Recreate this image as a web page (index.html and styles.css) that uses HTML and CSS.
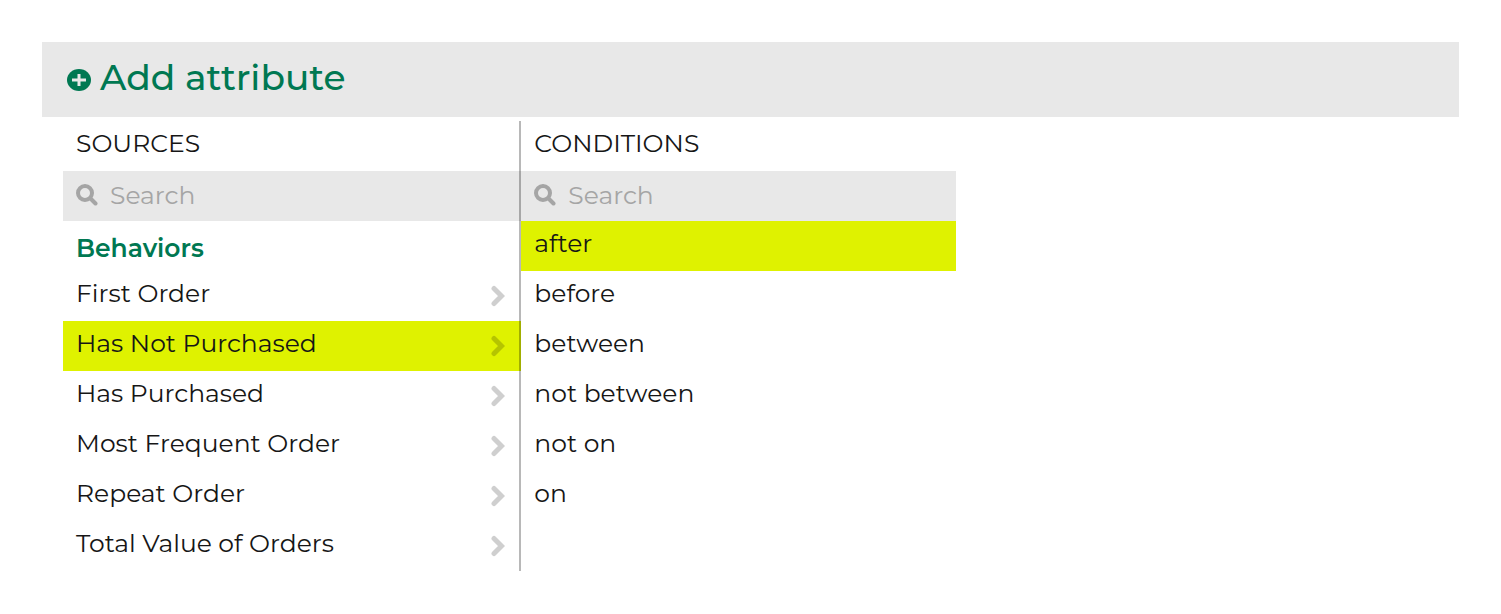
FILE: index.html
```html
<!DOCTYPE html>
<html lang="en">
<head>
<meta charset="utf-8">
<meta name="viewport" content="width=device-width, initial-scale=1">
<title>Add attribute</title>
<link rel="stylesheet" href="styles.css">
</head>
<body>
<svg width="0" height="0" class="sprite" aria-hidden="true">
  <symbol id="search" viewBox="0 0 22 22"><circle cx="9" cy="9" r="7" fill="none" stroke="currentColor" stroke-width="4"/><path d="M14.5 14.5L19.5 19.5" stroke="currentColor" stroke-width="4" stroke-linecap="round"/></symbol>
  <symbol id="chevron" viewBox="0 0 14 22"><path d="M3 3.500L10.500 11L3 18.500" fill="none" stroke="currentColor" stroke-width="5" stroke-linecap="round" stroke-linejoin="miter"/></symbol>
</svg>
<main class="page">
  <header class="bar">
    <button class="add" type="button">
      <svg class="add-icon" viewBox="0 0 24 22" aria-hidden="true"><ellipse cx="12" cy="11" rx="12" ry="11" fill="currentColor"/><path d="M12 5V17M5 11H19" stroke="#e8e8e8" stroke-width="3"/></svg>
      <span>Add attribute</span>
    </button>
  </header>
  <div class="picker">
    <section class="column sources">
      <h2 class="row title">SOURCES</h2>
      <label class="row search"><svg class="search-icon" aria-hidden="true"><use href="#search"/></svg><input class="field" type="text" placeholder="Search" aria-label="Search sources"></label>
      <h3 class="row group">Behaviors</h3>
      <button class="row option" type="button"><span>First Order</span><svg class="chevron" aria-hidden="true"><use href="#chevron"/></svg></button>
      <button class="row option selected" type="button"><span>Has Not Purchased</span><svg class="chevron" aria-hidden="true"><use href="#chevron"/></svg></button>
      <button class="row option" type="button"><span>Has Purchased</span><svg class="chevron" aria-hidden="true"><use href="#chevron"/></svg></button>
      <button class="row option" type="button"><span>Most Frequent Order</span><svg class="chevron" aria-hidden="true"><use href="#chevron"/></svg></button>
      <button class="row option" type="button"><span>Repeat Order</span><svg class="chevron" aria-hidden="true"><use href="#chevron"/></svg></button>
      <button class="row option" type="button"><span>Total Value of Orders</span><svg class="chevron" aria-hidden="true"><use href="#chevron"/></svg></button>
    </section>
    <section class="column">
      <h2 class="row title">CONDITIONS</h2>
      <label class="row search"><svg class="search-icon" aria-hidden="true"><use href="#search"/></svg><input class="field" type="text" placeholder="Search" aria-label="Search conditions"></label>
      <button class="row option selected" type="button"><span>after</span></button>
      <button class="row option" type="button"><span>before</span></button>
      <button class="row option" type="button"><span>between</span></button>
      <button class="row option" type="button"><span>not between</span></button>
      <button class="row option" type="button"><span>not on</span></button>
      <button class="row option" type="button"><span>on</span></button>
    </section>
  </div>
</main>
</body>
</html>
```
FILE: styles.css
```css
* { box-sizing: border-box; }
body {
  margin: 0;
  background: #fff;
  color: #161616;
  font-family: Montserrat, Inter, sans-serif;
  font-size: 25px;
  line-height: 32px;
}
button, input { font: inherit; color: inherit; border: 0; background: none; }
.sprite { display: block; }
.page { padding: 42px; }
.bar { padding: 13px 25px 18px; background: #e8e8e8; }
.add {
  display: flex;
  align-items: center;
  gap: 9px;
  padding: 0;
  color: #007852;
  font-size: 36px;
  font-weight: 500;
  line-height: 44px;
}
.add-icon { width: 24px; height: 22px; margin-top: 6px; }
.picker {
  display: grid;
  grid-template-columns: 458fr 434fr;
  align-items: start;
  width: 63%;
  margin: 4px 0 0 21px;
}
.row {
  display: flex;
  align-items: center;
  width: 100%;
  min-height: 50px;
  margin: 0;
  padding: 6px 13px 12px;
  font-size: 25px;
  font-weight: 400;
  text-align: left;
}
.sources .row { border-right: 2px solid rgba(0, 0, 0, .28); }
.search { gap: 12px; padding: 8px 13px 10px; background: #e8e8e8; color: #a5a5a5; }
.search-icon { flex: none; width: 22px; height: 22px; }
.field { flex: 1; min-width: 0; padding: 0; outline: 0; }
.field::placeholder { color: #a5a5a5; opacity: 1; }
.sources .group { padding: 11px 13px 7px; color: #007852; font-weight: 600; }
.option { justify-content: space-between; padding-right: 14px; cursor: pointer; }
.selected { background: #dff200; }
.chevron { width: 14px; height: 22px; margin-top: 6px; color: rgba(0, 0, 0, .19); }
```
